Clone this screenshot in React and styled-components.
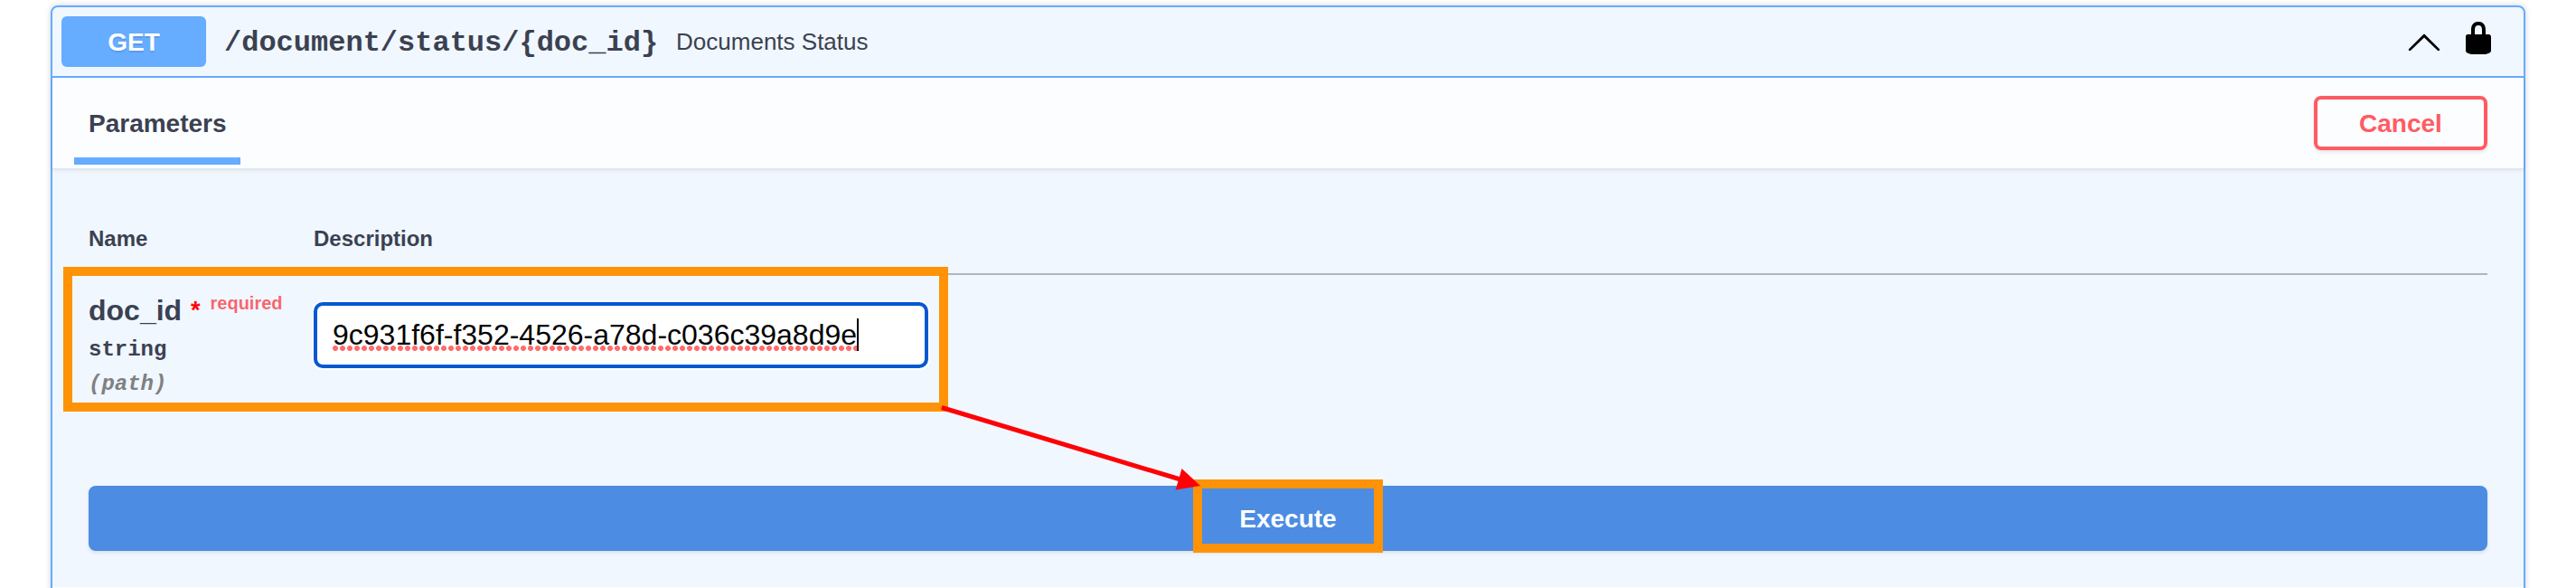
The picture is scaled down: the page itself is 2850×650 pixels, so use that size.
import React from 'react';
import styled, { createGlobalStyle } from 'styled-components';

const sans = '"Liberation Sans", Arial, Helvetica, sans-serif';
const mono = '"Liberation Mono", "Courier New", monospace';

const GlobalStyle = createGlobalStyle`
  * { box-sizing: border-box; }
  html, body { margin: 0; background: #fff; overflow: hidden; }
`;

const Page = styled.div`
  position: relative;
  width: 2850px;
  height: 650px;
  overflow: hidden;
  padding: 6px 56px 0;
  background: #fff;
  color: #3b4151;
  font-family: ${sans};
`;

const OperationPanel = styled.section`
  height: 700px;
  border: 2px solid #66acff;
  border-radius: 8px;
  background: #f0f7ff;
  box-shadow: 0 0 6px rgba(0, 0, 0, 0.19);
`;

const Summary = styled.header`
  display: flex;
  align-items: center;
  height: 78px;
  padding: 0 30px 0 10px;
  border-bottom: 2px solid #66acff;
`;

const Method = styled.span`
  width: 160px;
  height: 56px;
  border-radius: 6px;
  background: #66acff;
  color: #fff;
  font-size: 28px;
  font-weight: 700;
  line-height: 58px;
  text-align: center;
  text-shadow: 0 2px 0 rgba(0, 0, 0, 0.1);
`;

const Path = styled.span`
  margin-left: 20px;
  padding-top: 4px;
  font-family: ${mono};
  font-size: 32px;
  font-weight: 700;
  line-height: 36px;
`;

const SummaryText = styled.span`
  flex: 1;
  margin-left: 20px;
  font-size: 26px;
  line-height: 30px;
`;

const Icon = styled.svg`
  display: block;
  width: 40px;
  height: 40px;
  margin-left: ${(p) => p.$gap || 0}px;
  margin-bottom: ${(p) => p.$raise || 0}px;
`;

const SectionHeader = styled.div`
  display: flex;
  justify-content: space-between;
  height: 100px;
  padding: 0 40px 0 24px;
  background: #fcfdff;
  box-shadow: 0 2px 4px rgba(0, 0, 0, 0.1);
`;

const Tab = styled.h4`
  width: 184px;
  height: 96px;
  margin: 0;
  padding: 35px 0 0 16px;
  border-bottom: 8px solid #66acff;
  font-size: 28px;
  line-height: 32px;
`;

const CancelButton = styled.button`
  width: 192px;
  height: 60px;
  margin-top: 20px;
  padding: 2px 0 0;
  border: 4px solid #ff5b62;
  border-radius: 8px;
  background: transparent;
  box-shadow: 0 2px 4px rgba(0, 0, 0, 0.1);
  color: #ff5b62;
  font: 700 28px/50px ${sans};
`;

const Content = styled.div`
  padding: 0 40px;
`;

const ParameterHead = styled.div`
  display: grid;
  grid-template-columns: 249px 1fr;
  height: 118px;
  padding-top: 64px;
  border-bottom: 2px solid #b0b6c1;
  font-size: 24px;
  font-weight: 700;
  line-height: 28px;
`;

const ParameterRow = styled.div`
  display: grid;
  grid-template-columns: 249px 1fr;
  height: 233px;
`;

const NameCell = styled.div`
  padding-top: 21px;
`;

const ParameterName = styled.div`
  height: 36px;
  font-size: 32px;
  font-weight: 700;
  line-height: 36px;
  white-space: nowrap;
`;

const Star = styled.span`
  position: relative;
  top: -2px;
  padding: 0 1px;
  color: #ff0006;
  font-size: 27px;
  line-height: 1;
`;

const Required = styled.span`
  position: relative;
  top: -12px;
  padding-left: 10px;
  color: rgba(255, 0, 6, 0.6);
  font-size: 20px;
  line-height: 1;
`;

const ParameterMeta = styled.div`
  margin-top: ${(p) => p.$gap}px;
  color: ${(p) => p.$color || 'inherit'};
  font: ${(p) => (p.$italic ? 'italic' : 'normal')} 700 24px/28px ${mono};
`;

const TextField = styled.div`
  display: flex;
  align-items: center;
  width: 680px;
  height: 73px;
  margin-top: 30px;
  padding: 0 0 1px 17px;
  border: 4px solid #0459d1;
  border-radius: 10px;
  background: #fff;
  box-shadow: 0 0 0 2px #fff;
  color: #000;
  font-size: 32px;
`;

const MisspelledText = styled.span`
  height: 36px;
  line-height: 36px;
  background: radial-gradient(circle at 4px 3px, #ff6c6c 2.6px, transparent 3.3px) -1px 30px / 8px 6px repeat-x;
`;

const Caret = styled.span`
  width: 2px;
  height: 36px;
  background: #000;
`;

const ExecuteButton = styled.button`
  display: block;
  width: 100%;
  height: 72px;
  padding: 2px 0 0;
  border: 0;
  border-radius: 8px;
  background: #4c8ce3;
  box-shadow: 0 2px 4px rgba(0, 0, 0, 0.1);
  color: #fff;
  font: 700 28px/70px ${sans};
`;

const ResponsesHeader = styled.div`
  height: 50px;
  margin-top: 40px;
  background: #fcfdff;
`;

const Highlight = styled.div`
  position: absolute;
  left: ${(p) => p.$x}px;
  top: ${(p) => p.$y}px;
  width: ${(p) => p.$w}px;
  height: ${(p) => p.$h}px;
  border: 10px solid #fe9307;
`;

const Arrow = styled.svg`
  position: absolute;
  left: 1030px;
  top: 440px;
`;

export default function App() {
  return (
    <Page>
      <GlobalStyle />
      <OperationPanel>
        <Summary>
          <Method>GET</Method>
          <Path>{'/document/status/{doc_id}'}</Path>
          <SummaryText>Documents Status</SummaryText>
          <Icon viewBox="0 0 20 20">
            <path d="M17.418 14.908c.272.268.709.268.979 0s.271-.701 0-.969l-7.908-7.83c-.27-.268-.707-.268-.979 0l-7.908 7.83c-.27.268-.27.701 0 .969.271.268.709.268.979 0L10 7.767l7.418 7.141z" />
          </Icon>
          <Icon viewBox="0 0 20 20" $gap={20} $raise={8}>
            <path d="M15.8 8H14V5.6C14 2.703 12.665 1 10 1 7.334 1 6 2.703 6 5.6V8H4c-.553 0-1 .646-1 1.199V17c0 .549.428 1.139.951 1.307l1.197.387C5.672 18.861 6.55 19 7.1 19h5.8c.549 0 1.428-.139 1.951-.307l1.196-.387c.524-.167.953-.757.953-1.306V9.199C17 8.646 16.352 8 15.8 8zM12 8H8V5.199C8 3.754 8.797 3 10 3c1.203 0 2 .754 2 2.199V8z" />
          </Icon>
        </Summary>
        <SectionHeader>
          <Tab>Parameters</Tab>
          <CancelButton>Cancel</CancelButton>
        </SectionHeader>
        <Content>
          <ParameterHead>
            <span>Name</span>
            <span>Description</span>
          </ParameterHead>
          <ParameterRow>
            <NameCell>
              <ParameterName>
                doc_id <Star>*</Star>
                <Required>required</Required>
              </ParameterName>
              <ParameterMeta $gap={12}>string</ParameterMeta>
              <ParameterMeta $gap={10} $color="#808080" $italic>
                (path)
              </ParameterMeta>
            </NameCell>
            <TextField>
              <MisspelledText>9c931f6f-f352-4526-a78d-c036c39a8d9e</MisspelledText>
              <Caret />
            </TextField>
          </ParameterRow>
          <ExecuteButton>Execute</ExecuteButton>
        </Content>
        <ResponsesHeader />
      </OperationPanel>
      <Highlight $x={70} $y={295} $w={979} $h={160} />
      <Highlight $x={1320} $y={530} $w={210} $h={81} />
      <Arrow width="310" height="110">
        <line x1="11.8" y1="10.5" x2="276" y2="90" stroke="#ff0006" strokeWidth="5" />
        <path d="M298 97 277.5 78 270.7 101.5z" fill="#ff0006" />
      </Arrow>
    </Page>
  );
}
